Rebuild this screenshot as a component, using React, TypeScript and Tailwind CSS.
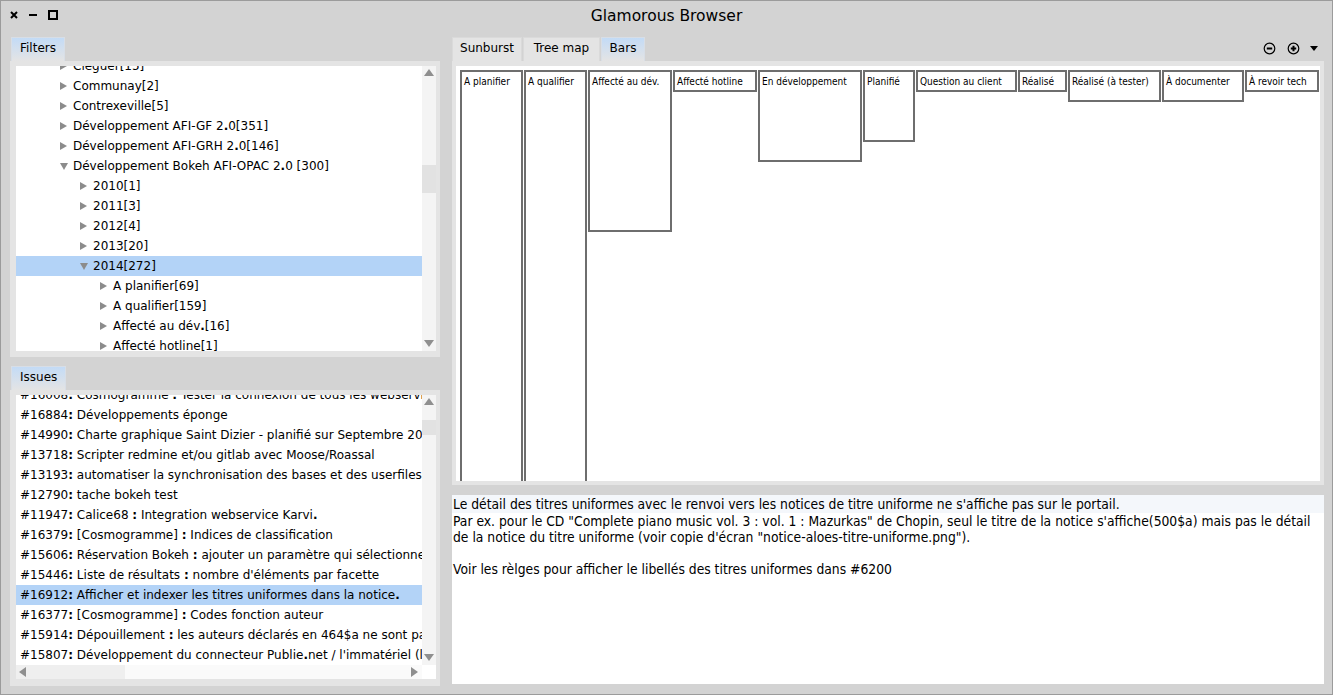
import React from "react";

const B = (s: string) =>
  s.split(/([:.])/).map((p, i) =>
    p === ":" || p === "." ? (
      <b key={i}>{p}</b>
    ) : (
      <React.Fragment key={i}>{p}</React.Fragment>
    )
  );

const ArrowRight = () => (
  <svg width="7" height="8" viewBox="0 0 7 8" className="shrink-0 mr-[6px]">
    <polygon points="0,0 7,4 0,8" fill="#8c8c8c" />
  </svg>
);
const ArrowDown = () => (
  <svg width="8" height="7" viewBox="0 0 8 7" className="shrink-0 mr-[5px]">
    <polygon points="0,0 8,0 4,7" fill="#8c8c8c" />
  </svg>
);

const ScrollArrow = ({ dir }: { dir: "up" | "down" | "left" | "right" }) => {
  const pts =
    dir === "up"
      ? "0,8 5,1 10,8"
      : dir === "down"
      ? "0,1 10,1 5,8"
      : dir === "left"
      ? "8,0 8,10 1,5"
      : "1,0 1,10 8,5";
  return (
    <div className="w-[14px] h-[14px] flex items-center justify-center shrink-0">
      <svg width="10" height="10" viewBox="0 0 10 10">
        <polygon points={pts} fill="#8f8f8f" />
      </svg>
    </div>
  );
};

const levelPad: Record<number, string> = {
  1: "pl-[44px]",
  2: "pl-[64px]",
  3: "pl-[84px]",
};

const tree: { t: string; l: number; open?: boolean; sel?: boolean }[] = [
  { t: "Cléguer[15]", l: 1 },
  { t: "Communay[2]", l: 1 },
  { t: "Contrexeville[5]", l: 1 },
  { t: "Développement AFI-GF 2.0[351]", l: 1 },
  { t: "Développement AFI-GRH 2.0[146]", l: 1 },
  { t: "Développement Bokeh AFI-OPAC 2.0 [300]", l: 1, open: true },
  { t: "2010[1]", l: 2 },
  { t: "2011[3]", l: 2 },
  { t: "2012[4]", l: 2 },
  { t: "2013[20]", l: 2 },
  { t: "2014[272]", l: 2, open: true, sel: true },
  { t: "A planifier[69]", l: 3 },
  { t: "A qualifier[159]", l: 3 },
  { t: "Affecté au dév.[16]", l: 3 },
  { t: "Affecté hotline[1]", l: 3 },
];

const issues: { t: string; sel?: boolean }[] = [
  { t: "#16008: Cosmogramme : Tester la connexion de tous les webservices" },
  { t: "#16884: Développements éponge" },
  { t: "#14990: Charte graphique Saint Dizier - planifié sur Septembre 2014" },
  { t: "#13718: Scripter redmine et/ou gitlab avec Moose/Roassal" },
  { t: "#13193: automatiser la synchronisation des bases et des userfiles" },
  { t: "#12790: tache bokeh test" },
  { t: "#11947: Calice68 : Integration webservice Karvi." },
  { t: "#16379: [Cosmogramme] : Indices de classification" },
  { t: "#15606: Réservation Bokeh : ajouter un paramètre qui sélectionne" },
  { t: "#15446: Liste de résultats : nombre d'éléments par facette" },
  { t: "#16912: Afficher et indexer les titres uniformes dans la notice.", sel: true },
  { t: "#16377: [Cosmogramme] : Codes fonction auteur" },
  { t: "#15914: Dépouillement : les auteurs déclarés en 464$a ne sont pas" },
  { t: "#15807: Développement du connecteur Publie.net / l'immatériel (lecture)" },
];

const bars: { t: string; w: string; h: string }[] = [
  { t: "A planifier", w: "w-[63px]", h: "h-[520px]" },
  { t: "A qualifier", w: "w-[63px]", h: "h-[520px]" },
  { t: "Affecté au dév.", w: "w-[84px]", h: "h-[162px]" },
  { t: "Affecté hotline", w: "w-[84px]", h: "h-[22px]" },
  { t: "En développement", w: "w-[104px]", h: "h-[92px]" },
  { t: "Planifié", w: "w-[52px]", h: "h-[72px]" },
  { t: "Question au client", w: "w-[101px]", h: "h-[22px]" },
  { t: "Réalisé", w: "w-[49px]", h: "h-[22px]" },
  { t: "Réalisé (à tester)", w: "w-[93px]", h: "h-[32px]" },
  { t: "À documenter", w: "w-[82px]", h: "h-[32px]" },
  { t: "À revoir tech", w: "w-[74px]", h: "h-[22px]" },
];

const Tab = ({ label, sel, w }: { label: string; sel?: boolean; w?: string }) => (
  <div
    className={
      "h-[24px] flex items-center justify-center pb-[3px] px-[8px] border border-b-0 " +
      (w ? w + " " : "") +
      (sel
        ? "bg-linear-to-b from-[#c3dbf6] to-[#e4e4e4] border-[#d8dee6]"
        : "bg-[#e4e4e4] border-[#dadada]")
    }
  >
    {label}
  </div>
);

export default function App() {
  return (
    <div className="w-[1333px] h-[695px] bg-[#d3d3d3] border border-[#9b9b9b] flex flex-col overflow-hidden font-['DejaVu_Sans',sans-serif] text-[12px] text-black">
      {/* title bar */}
      <div className="h-[27px] shrink-0 relative flex items-center">
        <div className="flex items-center ml-[9px] gap-[11px]">
          <svg width="8" height="8" viewBox="0 0 8 8">
            <path d="M1 1 L7 7 M7 1 L1 7" stroke="#000" strokeWidth="2" />
          </svg>
          <svg width="8" height="8" viewBox="0 0 8 8">
            <path d="M0 4 L8 4" stroke="#000" strokeWidth="2" />
          </svg>
          <svg width="10" height="10" viewBox="0 0 10 10">
            <rect x="1" y="1" width="8" height="8" fill="none" stroke="#000" strokeWidth="2" />
          </svg>
        </div>
        <div className="absolute left-0 right-0 top-[4px] text-center text-[15.5px] pointer-events-none">
          Glamorous Browser
        </div>
      </div>

      {/* body */}
      <div className="flex-1 flex pl-[9px] pt-[9px] gap-[12px]">
        {/* left column */}
        <div className="w-[430px] flex flex-col">
          {/* Filters */}
          <div className="flex h-[24px] pl-[1px]">
            <Tab label="Filters" sel />
          </div>
          <div className="h-[296px] bg-[#e4e4e4] pt-[5px] pl-[6px] pr-[4px] pb-[6px] flex">
            <div className="flex-1 bg-white overflow-hidden">
              <div className="-mt-[10px]">
                {tree.map((r, i) => (
                  <div
                    key={i}
                    className={
                      "h-[20px] flex items-center whitespace-nowrap " +
                      levelPad[r.l] +
                      (r.sel ? " bg-[#b3d3f7]" : "")
                    }
                  >
                    {r.open ? <ArrowDown /> : <ArrowRight />}
                    <span>{B(r.t)}</span>
                  </div>
                ))}
              </div>
            </div>
            <div className="w-[14px] bg-[#f4f4f4] flex flex-col">
              <ScrollArrow dir="up" />
              <div className="flex-1">
                <div className="mt-[85px] h-[28px] bg-[#e2e2e2]" />
              </div>
              <ScrollArrow dir="down" />
            </div>
          </div>

          {/* Issues */}
          <div className="flex h-[24px] pl-[1px] mt-[9px]">
            <Tab label="Issues" sel />
          </div>
          <div className="h-[296px] bg-[#e4e4e4] pt-[5px] pl-[6px] pr-[4px] pb-[7px] flex flex-col">
            <div className="flex h-[270px]">
              <div className="flex-1 bg-white overflow-hidden">
                <div className="-mt-[10px]">
                  {issues.map((r, i) => (
                    <div
                      key={i}
                      className={
                        "h-[20px] flex items-center whitespace-nowrap pl-[4px] " +
                        (r.sel ? "bg-[#b3d3f7]" : "")
                      }
                    >
                      <span className="whitespace-pre">{B(r.t)}</span>
                    </div>
                  ))}
                </div>
              </div>
              <div className="w-[14px] bg-[#f4f4f4] flex flex-col">
                <ScrollArrow dir="up" />
                <div className="flex-1">
                  <div className="mt-[11px] h-[15px] bg-[#e2e2e2]" />
                </div>
                <ScrollArrow dir="down" />
              </div>
            </div>
            <div className="flex h-[14px]">
              <div className="flex-1 flex bg-[#fafafa]">
                <div className="w-[109px] flex bg-[#efefef]">
                  <ScrollArrow dir="left" />
                </div>
                <div className="flex-1" />
                <ScrollArrow dir="right" />
              </div>
              <div className="w-[14px] bg-white" />
            </div>
          </div>
        </div>

        {/* right column */}
        <div className="w-[872px] flex flex-col">
          <div className="flex h-[24px] items-start">
            <div className="flex gap-[1px]">
              <Tab label="Sunburst" w="w-[70px]" />
              <Tab label="Tree map" w="w-[77px]" />
              <Tab label="Bars" w="w-[44px]" sel />
            </div>
            <div className="flex-1" />
            <div className="flex items-center mt-[5px] mr-[6px]">
              <svg width="13" height="13" viewBox="0 0 13 13">
                <circle cx="6.5" cy="6.5" r="5.3" fill="none" stroke="#000" strokeWidth="1.2" />
                <path d="M3.8 6.5 H9.2" stroke="#000" strokeWidth="2" />
              </svg>
              <svg width="13" height="13" viewBox="0 0 13 13" className="ml-[11px]">
                <circle cx="6.5" cy="6.5" r="5.3" fill="none" stroke="#000" strokeWidth="1.2" />
                <path d="M3.8 6.5 H9.2 M6.5 3.8 V9.2" stroke="#000" strokeWidth="2" />
              </svg>
              <svg width="8" height="5" viewBox="0 0 8 5" className="ml-[10px]">
                <polygon points="0,0 8,0 4,5" fill="#000" />
              </svg>
            </div>
          </div>
          <div className="h-[424px] bg-[#e4e4e4] pt-[5px] px-[4px] pb-[4px] flex">
            <div className="flex-1 bg-white overflow-hidden">
              <div className="flex items-start gap-[1px] pl-[4px] pt-[4px] font-['DejaVu_Sans_Condensed','DejaVu_Sans',sans-serif] font-stretch-condensed text-[10px] leading-[14px]">
                {bars.map((b, i) => (
                  <div
                    key={i}
                    className={
                      "shrink-0 border-2 border-[#6e6e6e] pl-[2px] pt-[3px] whitespace-nowrap overflow-hidden " +
                      b.w +
                      " " +
                      b.h
                    }
                  >
                    {b.t}
                  </div>
                ))}
              </div>
            </div>
          </div>
          <div className="mt-[10px] h-[189px] bg-white font-['DejaVu_Sans_Condensed','DejaVu_Sans',sans-serif] font-stretch-condensed text-[13.75px] leading-[16px]">
            <div className="h-[18px] bg-[#f4f7fb] pl-[1px] pt-[1px] whitespace-nowrap">
              Le détail des titres uniformes avec le renvoi vers les notices de titre uniforme ne s'affiche pas sur le portail.
            </div>
            <div className="pl-[1px] whitespace-nowrap">
              Par ex. pour le CD "Complete piano music vol. 3 : vol. 1 : Mazurkas" de Chopin, seul le titre de la notice s'affiche(500$a) mais pas le détail
            </div>
            <div className="pl-[1px] whitespace-nowrap">
              de la notice du titre uniforme (voir copie d'écran "notice-aloes-titre-uniforme.png").
            </div>
            <div className="h-[16px]" />
            <div className="pl-[1px] whitespace-nowrap">
              Voir les rèlges pour afficher le libellés des titres uniformes dans #6200
            </div>
          </div>
        </div>
      </div>
    </div>
  );
}
